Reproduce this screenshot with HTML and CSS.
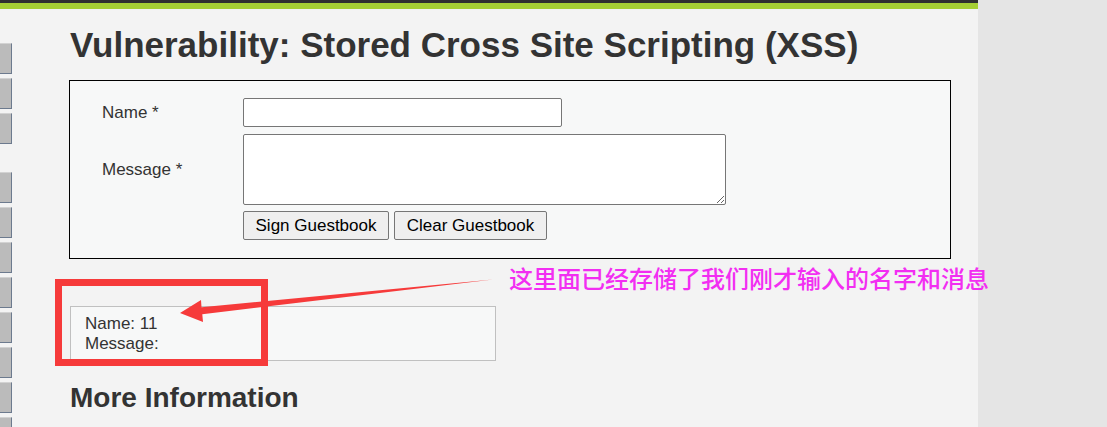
FILE: index.html
```html
<!DOCTYPE html>
<html lang="en">
<head>
<meta charset="utf-8">
<title>Vulnerability: Stored Cross Site Scripting (XSS)</title>
<link rel="stylesheet" href="styles.css">
</head>
<body>
<div class="page">
  <div class="topbar"></div>
  <div class="greenbar"></div>
  <div class="layout">
    <nav class="menu">
      <div class="menu-group">
        <span class="menu-btn"></span>
        <span class="menu-btn"></span>
        <span class="menu-btn"></span>
      </div>
      <div class="menu-group">
        <span class="menu-btn"></span>
        <span class="menu-btn"></span>
        <span class="menu-btn"></span>
        <span class="menu-btn"></span>
        <span class="menu-btn"></span>
        <span class="menu-btn"></span>
        <span class="menu-btn"></span>
        <span class="menu-btn"></span>
      </div>
    </nav>
    <main class="main">
      <h1 class="title">Vulnerability: Stored Cross Site Scripting (XSS)</h1>
      <div class="vulnerable-code">
        <form class="guest-form">
          <div class="row">
            <label class="label" for="txtName">Name *</label>
            <input class="name-input" id="txtName" type="text">
          </div>
          <div class="row row-msg">
            <label class="label" for="mtxMessage">Message *</label>
            <textarea class="msg-input" id="mtxMessage"></textarea>
          </div>
          <div class="row row-btns">
            <span class="label"></span>
            <div class="btns">
              <button type="button" class="btn btn-sign">Sign Guestbook</button>
              <button type="button" class="btn btn-clear">Clear Guestbook</button>
            </div>
          </div>
        </form>
      </div>
      <div class="guestbook">
        <div>Name: 11</div>
        <div>Message: </div>
      </div>
      <h2 class="subtitle">More Information</h2>
    </main>
  </div>
</div>
<div class="annotation-text">这里面已经存储了我们刚才输入的名字和消息</div>
<svg class="annotation" width="1107" height="427" viewBox="0 0 1107 427" xmlns="http://www.w3.org/2000/svg">
  <rect x="58.5" y="282.5" width="206" height="80" fill="none" stroke="#f63a3a" stroke-width="7"/>
  <polygon points="180,313 201,300 201.5,307.2 493,279.5 202.3,314.2 203,322" fill="#f63a3a"/>
</svg>
</body>
</html>
```

FILE: styles.css
```css
html, body {
  margin: 0;
  padding: 0;
}
body {
  background: #e5e5e5;
  font-family: "Liberation Sans", Arial, sans-serif;
  color: #333;
  position: relative;
  width: 1107px;
  height: 427px;
  overflow: hidden;
}
.page {
  width: 978px;
  min-height: 427px;
  background: #f3f3f3;
}
.topbar {
  height: 3px;
  background: #2f3030;
}
.greenbar {
  height: 6px;
  background: #a5cf34;
}
.layout {
  display: flex;
}
.menu {
  width: 13px;
  flex: none;
  padding-top: 34px;
  display: flex;
  flex-direction: column;
  gap: 28px;
}
.menu-group {
  display: flex;
  flex-direction: column;
  gap: 4px;
}
.menu-btn {
  display: block;
  width: 12px;
  height: 31px;
  box-sizing: border-box;
  background: #bbbbbb;
  border-top: 1px solid #d2d2d2;
  border-right: 1px solid #6c7a8e;
  border-bottom: 1px solid #6c7a8e;
}
.main {
  padding-left: 56px;
  flex: 1;
}
.title {
  margin: 16px 0 0 1px;
  font-size: 35px;
  line-height: 40px;
  font-weight: bold;
  color: #333;
}
.vulnerable-code {
  margin-top: 15px;
  width: 882px;
  box-sizing: border-box;
  border: 1px solid #000;
  background: #f7f8f8;
  padding: 17px 0 18px 32px;
}
.guest-form {
  margin: 0;
}
.row {
  display: flex;
  align-items: center;
}
.row-msg {
  margin-top: 7px;
}
.row-btns {
  margin-top: 6px;
}
.label {
  width: 141px;
  flex: none;
  font-size: 17px;
  color: #333;
}
.name-input {
  width: 319px;
  height: 29px;
  box-sizing: border-box;
  border: 1px solid #767676;
  border-radius: 2px;
  background: #fff;
  margin: 0;
  padding: 1px 2px;
}
.msg-input {
  width: 483px;
  height: 71px;
  box-sizing: border-box;
  border: 1px solid #767676;
  border-radius: 2px;
  background: #fff;
  margin: 0;
  padding: 2px;
}
.btns {
  display: flex;
  gap: 5px;
}
.btn {
  height: 29px;
  box-sizing: border-box;
  padding: 0;
  margin: 0;
  font-family: "Liberation Sans", Arial, sans-serif;
  font-size: 17px;
  color: #000;
  background: #efefef;
  border: 1px solid #767676;
  border-radius: 2px;
  text-align: center;
}
.btn-sign {
  width: 146px;
}
.btn-clear {
  width: 153px;
}
.guestbook {
  margin: 47px 0 0 1px;
  width: 426px;
  box-sizing: border-box;
  border: 1px solid #c0c0c0;
  background: #f7f8f8;
  padding: 7px 0 6px 14px;
  font-size: 17px;
  line-height: 20px;
  color: #333;
}
.subtitle {
  margin: 21px 0 0 1px;
  font-size: 28px;
  line-height: 32px;
  font-weight: bold;
  color: #333;
}
.annotation-text {
  position: absolute;
  left: 509px;
  top: 266px;
  font-family: "Noto Sans CJK SC", sans-serif;
  font-size: 24px;
  line-height: 24px;
  font-weight: 500;
  color: #f22ef2;
  white-space: nowrap;
}
.annotation {
  position: absolute;
  left: 0;
  top: 0;
  pointer-events: none;
}
```
